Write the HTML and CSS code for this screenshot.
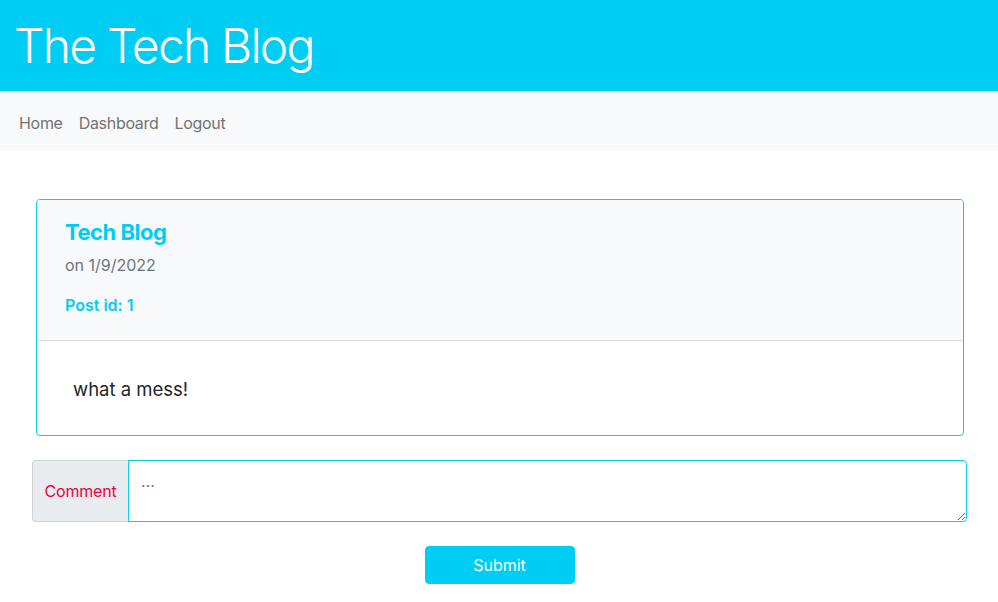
FILE: index.html
```html
<!DOCTYPE html>
<html>
<head>
<meta charset="utf-8">
<link rel="stylesheet" href="styles.css">
</head>
<body>
<header class="site-header">
  <h1 class="site-title">The Tech Blog</h1>
</header>
<nav class="site-nav">
  <a href="#">Home</a>
  <a href="#">Dashboard</a>
  <a href="#">Logout</a>
</nav>
<main class="main">
  <section class="card">
    <div class="card-header">
      <h2 class="card-title">Tech Blog</h2>
      <p class="card-date">on 1/9/2022</p>
      <p class="card-id">Post id: 1</p>
    </div>
    <div class="card-body">
      <p class="card-text">what a mess!</p>
    </div>
  </section>
  <form class="comment-form">
    <div class="input-group">
      <span class="input-label">Comment</span>
      <textarea class="input-area" placeholder="..."></textarea>
    </div>
    <div class="submit-row">
      <button type="button" class="submit-btn">Submit</button>
    </div>
  </form>
</main>
</body>
</html>
```

FILE: styles.css
```css
* { box-sizing: border-box; }
body {
  margin: 0;
  font-family: Inter, "Liberation Sans", sans-serif;
  color: #212529;
  background: #fff;
}
.site-header {
  background: #00cdf4;
  height: 91px;
  display: flex;
  align-items: center;
  padding: 0 14px;
}
.site-title {
  margin: 0;
  color: #fff;
  font-weight: 300;
  font-size: 48px;
  letter-spacing: -1.8px;
}
.site-nav {
  background: #f8f9fa;
  height: 60px;
  display: flex;
  align-items: center;
  padding: 4px 11px 0;
}
.site-nav a {
  color: #737373;
  text-decoration: none;
  font-size: 16px;
  letter-spacing: -0.3px;
  padding: 0 8px;
}
.main {
  padding: 48px 31px 0 32px;
}
.card {
  margin: 0 3px 0 4px;
  border: 1px solid #0dcaf0;
  border-radius: 4px;
  overflow: hidden;
}
.card-header {
  background: #f8f9fa;
  border-bottom: 1px solid #dcdcdc;
  padding: 18px 28px 26px;
  height: 141px;
}
.card-title {
  margin: 0;
  color: #00cdf4;
  font-size: 22px;
  font-weight: 700;
  letter-spacing: -0.5px;
  line-height: 28px;
}
.card-date {
  margin: 9px 0 0;
  color: #6c757d;
  font-size: 16px;
  line-height: 20px;
}
.card-id {
  margin: 20px 0 0;
  color: #00cdf4;
  font-size: 16px;
  font-weight: 600;
  line-height: 20px;
}
.card-body {
  height: 94px;
  padding: 36px 36px 0;
}
.card-text {
  margin: 0;
  font-size: 18.5px;
  line-height: 24px;
}
.comment-form { margin-top: 24px; }
.input-group {
  display: flex;
  height: 62px;
}
.input-label {
  width: 96px;
  background: #e9ecef;
  border: 1px solid #ced4da;
  border-right: none;
  border-radius: 4px 0 0 4px;
  color: #f0003c;
  font-size: 16px;
  letter-spacing: -0.2px;
  display: flex;
  align-items: center;
  justify-content: center;
}
.input-area {
  flex: 1;
  border: 1px solid #0dcaf0;
  border-radius: 0 4px 4px 0;
  font-family: Inter, "Liberation Sans", sans-serif;
  font-size: 16px;
  padding: 10px 12px;
  outline: none;
  resize: vertical;
}
.input-area::placeholder { color: #6c757d; }
.submit-row {
  display: flex;
  justify-content: center;
  margin-top: 24px;
}
.submit-btn {
  width: 150px;
  height: 38px;
  background: #00cdf4;
  border: 1px solid #00cdf4;
  border-radius: 4px;
  color: #fff;
  font-family: Inter, "Liberation Sans", sans-serif;
  font-size: 16px;
}
```
